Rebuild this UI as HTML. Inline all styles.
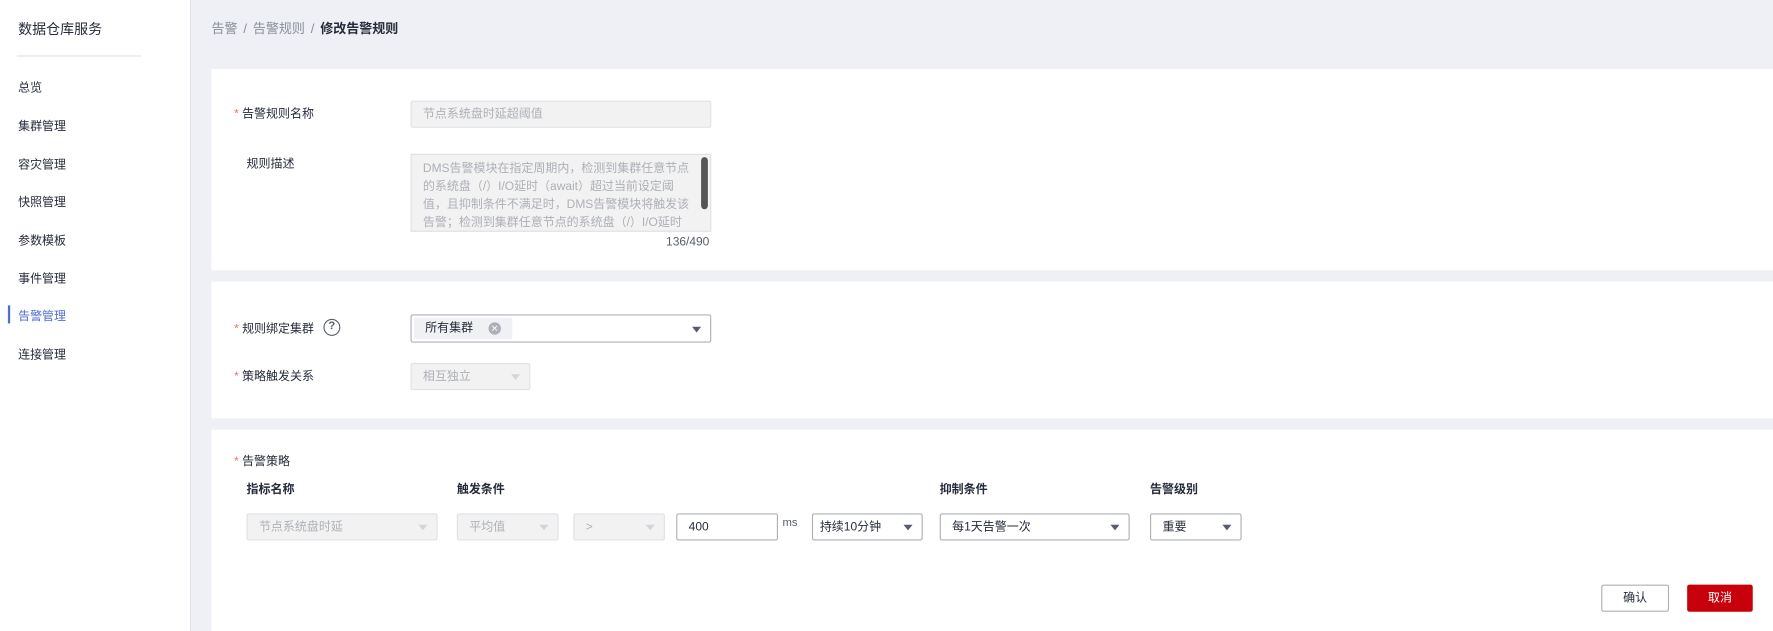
<!DOCTYPE html>
<html style="overflow:hidden;height:631px"><head><meta charset="utf-8"><style>
*{margin:0;padding:0;box-sizing:border-box}
body{width:1773px;height:631px;overflow:hidden;background:#eef0f5;font-family:"Liberation Sans","Noto Sans CJK SC",sans-serif;color:#252b3a;position:relative}
#w{position:absolute;left:0;top:0;width:1568px;height:558px;overflow:hidden;transform:scale(1.1308);transform-origin:0 0;font-size:10.6px}
.a{position:absolute;white-space:nowrap}
.side{position:absolute;left:0;top:0;width:169px;height:558px;background:#fff;border-right:1px solid #e0e2e8}
.card{position:absolute;left:187px;width:1400px;background:#fff}
.in{position:absolute;border:1px solid #adb0b8;border-radius:2px;background:#fff;height:24px;line-height:22px;padding-left:10px}
.dis{background:#f2f2f2;border-color:#dfe1e6;color:#adb0b8}
.arr{position:absolute;right:8px;top:9px;width:0;height:0;border-left:4px solid transparent;border-right:4px solid transparent;border-top:5px solid #575d6c}
.dis .arr{border-top-color:#d3d5da}
.star{color:#f66f6a}
.btn{position:absolute;height:24px;line-height:22px;text-align:center;border-radius:2px}
</style></head><body><div id="w">
<div class="side">
<div class="a" style="left:16px;top:16px;font-size:12.4px">数据仓库服务</div>
<div class="a" style="left:15px;top:49px;width:110px;border-top:1px solid #dfe1e6"></div>
<div class="a" style="left:16px;top:70px">总览</div>
<div class="a" style="left:16px;top:104px">集群管理</div>
<div class="a" style="left:16px;top:138px">容灾管理</div>
<div class="a" style="left:16px;top:171px">快照管理</div>
<div class="a" style="left:16px;top:205px">参数模板</div>
<div class="a" style="left:16px;top:239px">事件管理</div>
<div class="a" style="left:7px;top:270px;width:2px;height:16px;background:#526ecc"></div>
<div class="a" style="left:16px;top:272px;color:#526ecc">告警管理</div>
<div class="a" style="left:16px;top:306px">连接管理</div>
</div>
<div class="a" style="left:187px;top:17px;font-size:11.5px;color:#8a8e99">告警 <span style="margin:0 2px">/</span> 告警规则 <span style="margin:0 2px">/</span> <b style="color:#252b3a">修改告警规则</b></div>

<div class="card" style="top:61px;height:178px"></div>
<div class="card" style="top:249px;height:121px"></div>
<div class="card" style="top:380px;height:178px"></div>

<div class="a" style="left:207px;top:93px"><span class="star">*</span> 告警规则名称</div>
<div class="in dis" style="left:363px;top:89px;width:266px;color:#adb0b8">节点系统盘时延超阈值</div>
<div class="a" style="left:218px;top:137px">规则描述</div>
<div class="a" style="left:363px;top:136px;width:266px;height:69px;border:1px solid #dfe1e6;background:#f2f2f2;overflow:hidden;color:#adb0b8;white-space:normal;padding:4px 14px 0 10px;line-height:16px">DMS告警模块在指定周期内，检测到集群任意节点的系统盘（/）I/O延时（await）超过当前设定阈值，且抑制条件不满足时，DMS告警模块将触发该告警；检测到集群任意节点的系统盘（/）I/O延时（await）低于当前设定阈值，且抑制条件不满足</div>
<div class="a" style="left:620px;top:139px;width:6px;height:46px;background:#555;border-radius:3px"></div>
<div class="a" style="left:589px;top:208px;color:#575d6c">136/490</div>

<div class="a" style="left:207px;top:283px"><span class="star">*</span> 规则绑定集群</div>
<div class="a" style="left:286px;top:282px;width:15px;height:15px;border:1.3px solid #575d6c;border-radius:50%;font-size:10px;text-align:center;line-height:12px;font-weight:bold;color:#575d6c">?</div>
<div class="in" style="left:363px;top:278px;width:266px;height:25px;padding:0">
<div class="a" style="left:2px;top:2px;width:87px;height:19px;background:#f0f1f5;border-radius:2px;line-height:19px;padding-left:10px">所有集群</div>
<div class="a" style="left:68px;top:6px;width:11px;height:11px;border-radius:50%;background:#adb0b8;color:#fff;font-size:8px;line-height:11px;text-align:center">✕</div>
<div class="arr" style="top:10px"></div></div>
<div class="a" style="left:207px;top:325px"><span class="star">*</span> 策略触发关系</div>
<div class="in dis" style="left:363px;top:321px;width:106px">相互独立<div class="arr"></div></div>

<div class="a" style="left:207px;top:400px"><span class="star">*</span> 告警策略</div>
<div class="a" style="left:218px;top:425px;font-weight:bold">指标名称</div>
<div class="a" style="left:404px;top:425px;font-weight:bold">触发条件</div>
<div class="a" style="left:831px;top:425px;font-weight:bold">抑制条件</div>
<div class="a" style="left:1017px;top:425px;font-weight:bold">告警级别</div>
<div class="in dis" style="left:218px;top:454px;width:169px">节点系统盘时延<div class="arr"></div></div>
<div class="in dis" style="left:404px;top:454px;width:90px">平均值<div class="arr"></div></div>
<div class="in dis" style="left:507px;top:454px;width:81px">&gt;<div class="arr"></div></div>
<div class="in" style="left:598px;top:454px;width:90px">400</div>
<div class="a" style="left:692px;top:457px;font-size:10px;color:#575d6c">ms</div>
<div class="in" style="left:718px;top:454px;width:98px;padding-left:6px">持续10分钟<div class="arr"></div></div>
<div class="in" style="left:831px;top:454px;width:168px;padding-left:10px">每1天告警一次<div class="arr"></div></div>
<div class="in" style="left:1017px;top:454px;width:81px">重要<div class="arr"></div></div>

<div class="btn" style="left:1416px;top:517px;width:60px;border:1px solid #adb0b8;background:#fff">确认</div>
<div class="btn" style="left:1492px;top:517px;width:58px;background:#c7000b;color:#fff;border:1px solid #c7000b">取消</div>
</div></body></html>
